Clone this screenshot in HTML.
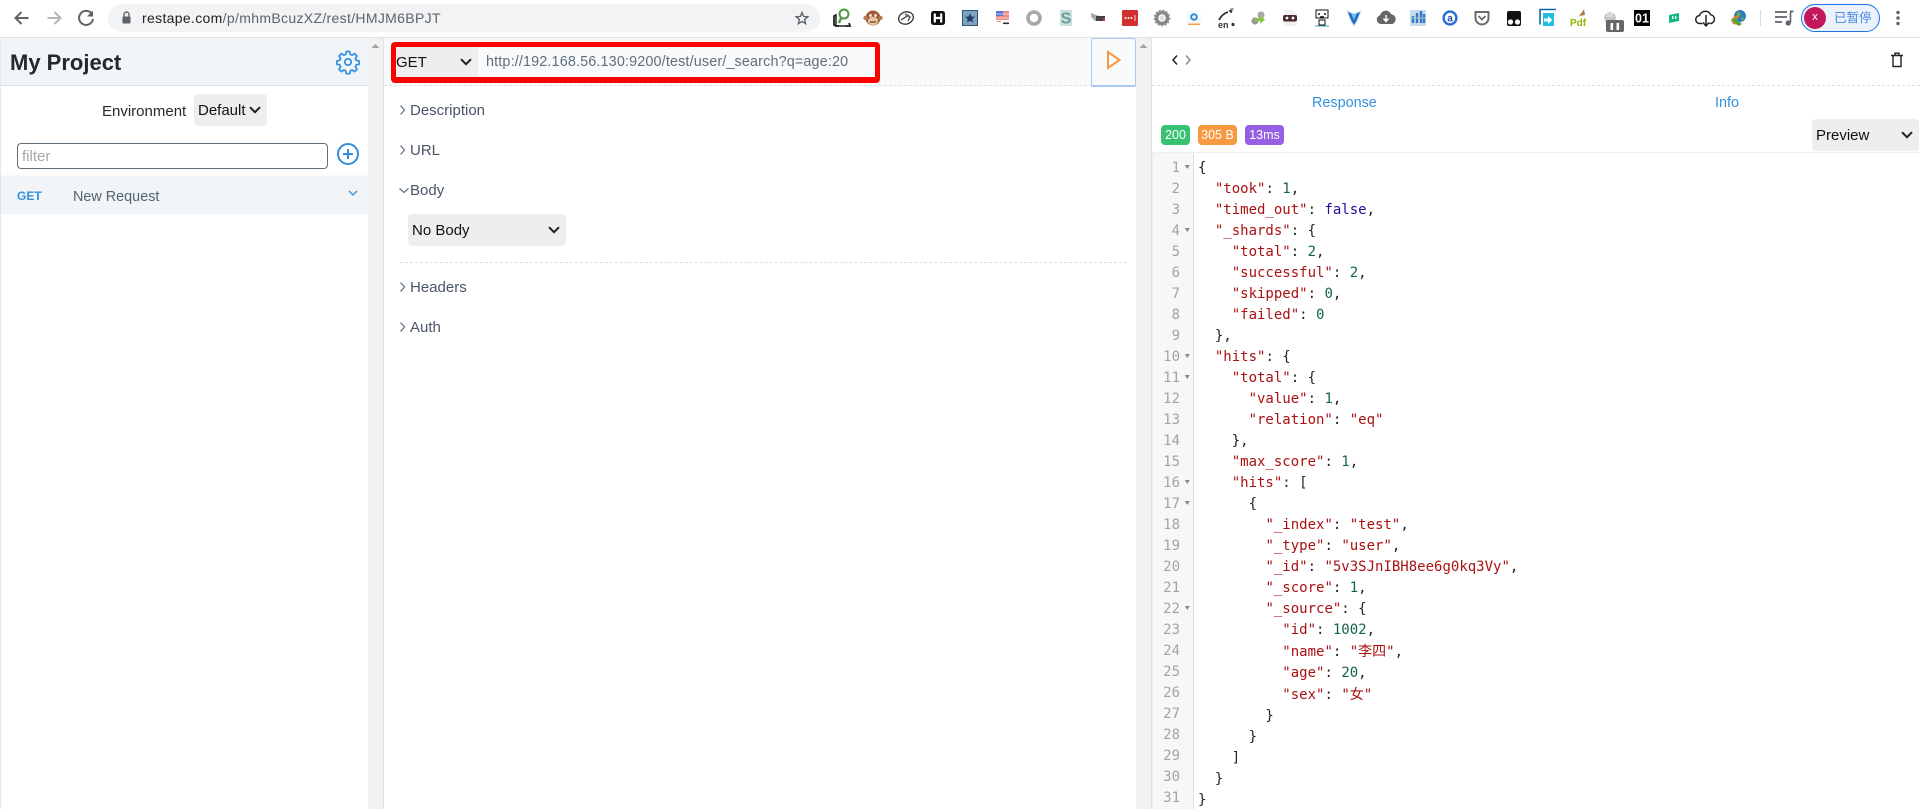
<!DOCTYPE html>
<html><head><meta charset="utf-8"><title>Restape</title>
<style>
html,body{margin:0;padding:0;width:1920px;height:809px;overflow:hidden;background:#fff;font-family:"Liberation Sans","Noto Sans CJK SC",sans-serif}
.a{position:absolute}
.t{position:absolute;white-space:nowrap;line-height:20px;height:20px}
.sel{position:absolute;background:#eee;border-radius:4px}
.sec{color:#4a5568;font-size:15px}
svg{position:absolute;overflow:visible}
.code{position:absolute;left:1198px;top:158px;margin:0;font:14px/21px "DejaVu Sans Mono","WenQuanYi Zen Hei",monospace;color:#222;white-space:pre}
.code i{font-style:normal;color:#a11}.code b{font-weight:normal;color:#164}.code u{text-decoration:none;color:#219}
.code em{font-style:normal;font-family:"WenQuanYi Zen Hei","Noto Sans CJK SC",sans-serif;color:#a11}
.nums{position:absolute;left:1153px;top:158px;width:27px;text-align:right;font:14px/21px "DejaVu Sans Mono",monospace;color:#a3a3a3;white-space:pre}
</style></head><body>

<!-- browser toolbar -->
<div class="a" style="left:0;top:0;width:1920px;height:37px;background:#fff"></div>
<div class="a" style="left:0;top:37px;width:1920px;height:1px;background:#dfe1e5"></div>
<div class="a" style="left:108px;top:4px;width:712px;height:28px;background:#f1f3f4;border-radius:14px"></div>
<div class="t" style="left:142px;top:8px;font-size:14px;color:#5f6368;letter-spacing:.33px"><span style="color:#202124">restape.com</span>/p/mhmBcuzXZ/rest/HMJM6BPJT</div>

<svg style="left:0;top:0" width="1920" height="37" viewBox="0 0 1920 37">
<!-- nav -->
<path d="M28.5 18H16M21.5 12l-6 6 6 6" fill="none" stroke="#5f6368" stroke-width="2"/>
<path d="M47.5 18H60M54.5 12l6 6-6 6" fill="none" stroke="#b4b7ba" stroke-width="2"/>
<path d="M91.5 13.5A7 7 0 1 0 93 19" fill="none" stroke="#5f6368" stroke-width="2"/><path d="M93 10.5v6h-6z" fill="#5f6368"/>
<rect x="122.5" y="16.5" width="8" height="7" rx="1" fill="#5f6368"/><path d="M124 17v-2.5a2.5 2.5 0 0 1 5 0V17" fill="none" stroke="#5f6368" stroke-width="1.4"/>
<path d="M802 12.5l1.6 3.9 4.2.4-3.2 2.7 1 4.1-3.6-2.2-3.6 2.2 1-4.1-3.2-2.7 4.2-.4z" fill="none" stroke="#5f6368" stroke-width="1.4"/>

<!-- 842 -->
<path d="M836 15l-2 1v9l2 1h3M846 26h4l-1-3" fill="none" stroke="#222" stroke-width="1.8"/><path d="M836 14v12h12" fill="none" stroke="#222" stroke-width="1.5"/>
<circle cx="844" cy="14" r="4.5" fill="#fff" stroke="#4c9a3f" stroke-width="2"/><path d="M841 18l-2 5" stroke="#4c9a3f" stroke-width="2.4"/>
<!-- 873 monkey -->
<circle cx="873" cy="18" r="7.5" fill="#9c5b3a"/><circle cx="865.5" cy="18" r="2.2" fill="#b77b58"/><circle cx="880.5" cy="18" r="2.2" fill="#b77b58"/>
<ellipse cx="873" cy="21" rx="5" ry="4.2" fill="#e8c4a0"/><circle cx="870.5" cy="15.5" r="1.5" fill="#f3dcc4"/><circle cx="875.5" cy="15.5" r="1.5" fill="#f3dcc4"/><path d="M870 22h6" stroke="#60392a" stroke-width="1.2"/>
<!-- 906 oval -->
<ellipse cx="906" cy="18" rx="7.5" ry="6" transform="rotate(-18 906 18)" fill="#fff" stroke="#333" stroke-width="1.3"/><path d="M901 20l8-5M905 14l5 3-2 4" fill="none" stroke="#555" stroke-width="1.4"/>
<!-- 938 H -->
<rect x="931" y="11" width="14" height="14" rx="2.5" fill="#111"/><path d="M934.8 13.5v9M941.2 13.5v9M934.8 18h6.4" stroke="#fff" stroke-width="2.2"/>
<!-- 970 star -->
<rect x="962.5" y="10.5" width="15" height="15" fill="#7da3c4" stroke="#2f5375" stroke-width="1"/><path d="M970 13.2l1.4 3.3 3.6.3-2.7 2.3.8 3.5-3.1-1.8-3.1 1.8.8-3.5-2.7-2.3 3.6-.3z" fill="#1d3f66"/>
<!-- 1002 flag -->
<rect x="996" y="11" width="13" height="9" fill="#ef8d84"/><rect x="996" y="11" width="7" height="5" fill="#5578d8"/><path d="M996 14h13M996 18h13" stroke="#fff" stroke-width=".7" opacity=".7"/><rect x="997" y="21" width="4" height="1" fill="#ef8d84"/><rect x="1003" y="22.5" width="6" height="1.6" fill="#333"/>
<!-- 1034 ring -->
<circle cx="1034" cy="18" r="6" fill="none" stroke="#a8a8a8" stroke-width="3.6"/>
<!-- 1066 S -->
<rect x="1060" y="10" width="12" height="16" fill="#c9e0de" /><text x="1066" y="23.5" font-family="Liberation Sans" font-weight="bold" font-size="16" text-anchor="middle" fill="#6d9a98">S</text>
<!-- 1098 -->
<path d="M1091 13l11 4 3 1v3h-10l-4-4z" fill="#aaa"/><rect x="1096" y="16" width="9" height="5" fill="#444"/><rect x="1103" y="18" width="2" height="3" fill="#b44"/>
<!-- 1130 red -->
<rect x="1122" y="10" width="16" height="16" rx="1" fill="#d32f2f"/><circle cx="1125.5" cy="18" r="1" fill="#fff"/><circle cx="1128.5" cy="18" r="1" fill="#fff"/><circle cx="1131.5" cy="18" r="1" fill="#fff"/><path d="M1135 15v6" stroke="#fff" stroke-width=".8"/>
<!-- 1162 gear -->
<circle cx="1162" cy="18" r="5.5" fill="none" stroke="#888" stroke-width="3.5"/><circle cx="1162" cy="18" r="7.6" fill="none" stroke="#999" stroke-width="1.6" stroke-dasharray="2 1.6"/><circle cx="1162" cy="18" r="2.5" fill="#ddd"/>
<!-- 1194 -->
<rect x="1187" y="10" width="14" height="16" fill="#f7fafd"/><circle cx="1194" cy="17" r="2.8" fill="none" stroke="#2a8fd8" stroke-width="2"/><rect x="1188" y="23.5" width="12" height="1.5" fill="#f4a63a"/>
<!-- 1226 en -->
<path d="M1219 20q3-6 9-8" fill="none" stroke="#222" stroke-width="1.6"/><path d="M1229 11l3-1-1 3" fill="#222" stroke="#222"/>
<text x="1218" y="28" font-family="Liberation Sans" font-size="9" font-weight="bold" fill="#333">en</text><circle cx="1233" cy="24.5" r="1.6" fill="#333"/><path d="M1230 9h4M1232 9v3" stroke="#777" stroke-width="1"/>
<!-- 1258 -->
<circle cx="1255" cy="21" r="3.6" fill="#999"/><circle cx="1261" cy="15" r="3.6" fill="#aaa"/><path d="M1255 18h5v-3l5 4.5-5 4.5v-3h-5z" fill="#8bc34a"/>
<!-- 1290 mask -->
<path d="M1284 10h9l4 4v12h-13z" fill="#f1f1f1"/><rect x="1283" y="15" width="14" height="6.5" rx="2" fill="#4a2a2a"/><circle cx="1287" cy="18" r="1.4" fill="#fff"/><circle cx="1293" cy="18" r="1.4" fill="#fff"/>
<!-- 1322 pixel -->
<path d="M1316 10h12v8h-12zM1319 20h6v5h-6z" fill="#fff" stroke="#111" stroke-width="1"/><path d="M1318 14h2M1324 14h2M1320 17h4" stroke="#111" stroke-width="1.4"/><rect x="1315" y="25.5" width="14" height="1" fill="#3aa7c9"/>
<!-- 1354 Y -->
<path d="M1347 11l7 3 7-3-4 10-3 5-3-5z" fill="#1e6ec8" stroke="#cfe0f0" stroke-width="1"/><path d="M1351 13l3 2 3-2-3 7z" fill="#7fc4f0"/>
<!-- 1386 cloud -->
<path d="M1381 24a4.5 4.5 0 0 1-1-8.8 6 6 0 0 1 11.3-1 5 5 0 0 1 .7 9.8z" fill="#666"/><path d="M1386 15v5M1383.5 18.5l2.5 3 2.5-3" fill="none" stroke="#fff" stroke-width="1.4"/>
<!-- 1418 -->
<rect x="1410" y="10" width="16" height="16" fill="#c5dcec"/><path d="M1413 16v7M1417 13v10M1421 11v12M1424 14v9" stroke="#3a78c2" stroke-width="2.4"/><path d="M1410 18h16" stroke="#9cc" stroke-width="1"/>
<!-- 1450 a -->
<circle cx="1450" cy="18" r="7.6" fill="#2a6fd6" /><circle cx="1450" cy="18" r="5.2" fill="#fff"/><text x="1450" y="21.5" font-family="Liberation Sans" font-weight="bold" font-size="10" text-anchor="middle" fill="#1a4fa8">a</text>
<!-- 1482 pocket -->
<path d="M1475.5 12h13v6a6.5 6.5 0 0 1-13 0z" fill="#fff" stroke="#6a6a6a" stroke-width="2"/><path d="M1478.5 16l3.5 3.5 3.5-3.5" fill="none" stroke="#6a6a6a" stroke-width="1.8"/>
<!-- 1514 black -->
<path d="M1507 13q0-2 2-2h10q2 0 2 2v11q0 2-2 2h-10q-2 0-2-2z" fill="#111"/><circle cx="1510.5" cy="22" r="2.6" fill="#fff"/><circle cx="1517.5" cy="22" r="2.6" fill="#fff"/>
<!-- 1547 blue -->
<path d="M1556 9.5h-16v15" fill="none" stroke="#0d6aa8" stroke-width="1.6"/><rect x="1543" y="13" width="11" height="13" fill="#22bde0"/><path d="M1544 18.5h4v-2.5l4.5 4-4.5 4v-2.5h-4z" fill="#fff"/>
<!-- 1578 pdf -->
<text x="1570" y="26" font-family="Liberation Sans" font-weight="bold" font-size="10" fill="#8cb800">Pdf</text><path d="M1579 16l4-5 1-2 1 6z" fill="#a8743a"/>
<!-- 1610 ghost -->
<circle cx="1610" cy="18" r="5.8" fill="#c4c4c4"/><text x="1610" y="17" font-family="Liberation Sans" font-size="5" text-anchor="middle" fill="#fff">SR</text>
<rect x="1606" y="20" width="18" height="12" rx="2" fill="#666"/><rect x="1610.5" y="23" width="2.6" height="7" fill="#fff"/><rect x="1616.5" y="23" width="2.6" height="7" fill="#fff"/>
<!-- 1642 01 -->
<rect x="1634" y="10" width="16" height="16" fill="#000"/><text x="1642" y="22.5" font-family="Liberation Sans" font-weight="bold" font-size="12.5" text-anchor="middle" fill="#fff">01</text>
<!-- 1674 -->
<path d="M1669 15l10-2v8l-10 2z" fill="#12b886"/><rect x="1672" y="16" width="1.4" height="3" fill="#fff"/><rect x="1675" y="16" width="1.4" height="3" fill="#fff"/>
<!-- 1706 cloud dl -->
<path d="M1702.5 23.5h-2.5a4 4 0 0 1-.5-8 6 6 0 0 1 11.2-.8 4.5 4.5 0 0 1 .3 8.8h-1.5" fill="none" stroke="#222" stroke-width="1.5"/><path d="M1706 15v11M1703 22.5l3 3.5 3-3.5" fill="none" stroke="#222" stroke-width="1.5"/>
<!-- 1738 globe -->
<circle cx="1740" cy="16" r="6" fill="#2f7bc4"/><path d="M1737 12l4 1-1 3-3 1zM1741 17l3 1-2 3z" fill="#6cb24a"/><path d="M1731 20q4-6 9-4-3 1-4 7l2 2-5-1z" fill="#d9822b"/><path d="M1731 20l8 6 3-2-7-6z" fill="#55a83c"/>
<!-- divider -->
<rect x="1760" y="10" width="1" height="16" fill="#dadce0"/>
<!-- music -->
<path d="M1775 12h12M1775 17h12M1775 22h7" stroke="#5f6368" stroke-width="1.8"/><path d="M1790.5 12v10.5" stroke="#5f6368" stroke-width="1.6"/><circle cx="1788.2" cy="23" r="2.6" fill="#5f6368"/><path d="M1790 11.5h3.5" stroke="#5f6368" stroke-width="1.8"/>
<!-- dots -->
<circle cx="1898" cy="12.5" r="1.7" fill="#5f6368"/><circle cx="1898" cy="18" r="1.7" fill="#5f6368"/><circle cx="1898" cy="23.5" r="1.7" fill="#5f6368"/>
</svg>
<!-- profile pill -->
<div class="a" style="left:1801px;top:4px;width:77px;height:26px;border:1px solid #1a73e8;border-radius:14px;background:#ecf2fc"></div>
<div class="a" style="left:1804px;top:7px;width:22px;height:22px;border-radius:50%;background:#c2185b;color:#fff;font-size:11px;line-height:21px;text-align:center">x</div>
<div class="t" style="left:1834px;top:7px;font-size:12.5px;color:#4285e0;font-family:'Noto Sans CJK SC',sans-serif">已暂停</div>

<!-- sidebar -->
<div class="a" style="left:0;top:38px;width:1px;height:771px;background:#e2e8f0"></div>
<div class="a" style="left:1px;top:38px;width:367px;height:47px;background:#f1f5f8;border-bottom:1px solid #dae1e7"></div>
<div class="t" style="left:10px;top:53px;font-size:22px;font-weight:bold;color:#22292f">My Project</div>
<svg style="left:336px;top:50px" width="24" height="24" viewBox="0 0 24 24" fill="none" stroke="#3490dc" stroke-width="1.7" stroke-linejoin="round"><circle cx="12" cy="12" r="3.2"/><path d="M10.3 1.5h3.4l.6 2.9 1.8.8 2.5-1.6 2.4 2.4-1.6 2.5.8 1.8 2.9.6v3.4l-2.9.6-.8 1.8 1.6 2.5-2.4 2.4-2.5-1.6-1.8.8-.6 2.9h-3.4l-.6-2.9-1.8-.8-2.5 1.6-2.4-2.4 1.6-2.5-.8-1.8-2.9-.6v-3.4l2.9-.6.8-1.8-1.6-2.5 2.4-2.4 2.5 1.6 1.8-.8z"/></svg>
<div class="t" style="left:102px;top:102px;font-size:15px;color:#22292f">Environment</div>
<div class="sel" style="left:194px;top:94px;width:73px;height:32px"></div>
<div class="t" style="left:198px;top:101px;font-size:15px;color:#111">Default</div>
<svg style="left:249px;top:106px" width="12" height="8" viewBox="0 0 12 8"><path d="M1 1.2l5 5 5-5" fill="none" stroke="#222" stroke-width="2"/></svg>
<div class="a" style="left:17px;top:143px;width:309px;height:24px;border:1px solid #606f7b;border-radius:4px;background:#fff"></div>
<div class="t" style="left:22px;top:147px;font-size:15px;color:#a8a8a8">filter</div>
<svg style="left:336px;top:142px" width="24" height="24" viewBox="0 0 24 24" fill="none" stroke="#3490dc" stroke-width="2"><circle cx="12" cy="12" r="10"/><path d="M12 7v10M7 12h10"/></svg>
<div class="a" style="left:1px;top:177px;width:367px;height:37px;background:#f1f5f8;box-shadow:0 -2px 3px rgba(0,0,0,.04)"></div>
<div class="t" style="left:17px;top:186px;font-size:12px;font-weight:bold;color:#3490dc">GET</div>
<div class="t" style="left:73px;top:187px;font-size:14.4px;color:#56636e">New Request</div>
<svg style="left:348px;top:190px" width="10" height="6" viewBox="0 0 10 6"><path d="M1 1l4 4 4-4" fill="none" stroke="#3490dc" stroke-width="1.3"/></svg>

<!-- sidebar scrollbar -->
<div class="a" style="left:368px;top:38px;width:15px;height:771px;background:#f1f1f1"></div>
<svg style="left:371px;top:43px" width="10" height="6"><path d="M4.5 1l4 4h-8z" fill="#a3a3a3"/></svg>
<div class="a" style="left:383px;top:38px;width:1px;height:771px;background:#dae1e7"></div>

<!-- center -->
<div class="a" style="left:384px;top:38px;width:708px;height:47px;background:#f8fafc;border-bottom:1px dashed #dae1e7"></div>
<div class="a" style="left:391px;top:42px;width:489px;height:41px;border-radius:4px;background:#f00"></div>
<div class="a" style="left:396px;top:47px;width:479px;height:30px;background:#f8fafc"></div>
<div class="a" style="left:396px;top:47px;width:82px;height:30px;background:#eee"></div>
<div class="t" style="left:396px;top:53px;font-size:15px;color:#111">GET</div>
<svg style="left:460px;top:58px" width="12" height="8" viewBox="0 0 12 8"><path d="M1 1.2l5 5 5-5" fill="none" stroke="#222" stroke-width="2"/></svg>
<div class="t" style="left:486px;top:52px;font-size:14.4px;color:#606f7b;letter-spacing:.14px">http://192.168.56.130:9200/test/user/_search?q=age:20</div>
<div class="a" style="left:1091px;top:38px;width:43px;height:46px;background:#f8fafc;border:1px solid #a9c9f5;border-bottom-width:2px;border-radius:2px"></div>
<svg style="left:1105px;top:50px" width="18" height="20" viewBox="0 0 18 20"><path d="M3 2l11.5 8L3 18z" fill="none" stroke="#f6993f" stroke-width="2"/></svg>
<div class="a" style="left:1136px;top:38px;width:15px;height:771px;background:#f1f1f1"></div>
<svg style="left:1139px;top:43px" width="10" height="6"><path d="M4.5 1l4 4h-8z" fill="#a3a3a3"/></svg>
<div class="a" style="left:1151px;top:38px;width:1px;height:771px;background:#dae1e7"></div>

<!-- sections -->
<svg style="left:399px;top:0" width="14" height="340" fill="none" stroke="#606f7b" stroke-width="1.2"><path d="M1.5 105.5l4 4.5-4 4.5M1.5 145.5l4 4.5-4 4.5M.5 188.5l4.5 4 4.5-4M1.5 282.5l4 4.5-4 4.5M1.5 322.5l4 4.5-4 4.5"/></svg>
<div class="t sec" style="left:410px;top:101px;">Description</div>
<div class="t sec" style="left:410px;top:141px;">URL</div>
<div class="t sec" style="left:410px;top:181px;">Body</div>
<div class="sel" style="left:408px;top:214px;width:158px;height:32px"></div>
<div class="t" style="left:412px;top:221px;font-size:15px;color:#111">No Body</div>
<svg style="left:548px;top:226px" width="12" height="8" viewBox="0 0 12 8"><path d="M1 1.2l5 5 5-5" fill="none" stroke="#222" stroke-width="2"/></svg>
<div class="a" style="left:400px;top:262px;width:727px;border-top:1px dashed #dae1e7"></div>
<div class="t sec" style="left:410px;top:278px;">Headers</div>
<div class="t sec" style="left:410px;top:318px;">Auth</div>

<!-- right panel -->
<svg style="left:1170px;top:54px" width="24" height="12" fill="none" stroke-width="1.5"><path d="M7 1.5l-4 4.5 4 4.5" stroke="#222"/><path d="M16 1.5l4 4.5-4 4.5" stroke="#8a8a8a"/></svg>
<svg style="left:1890px;top:52px" width="14" height="16" viewBox="0 0 14 16" fill="none" stroke="#222" stroke-width="1.4"><path d="M3 4v10.5h8V4M1 3.5h12M5 3.5V1.2h4v2.3"/></svg>
<div class="a" style="left:1152px;top:85px;width:768px;border-top:1px dashed #dae1e7"></div>
<div class="t" style="left:1312px;top:93px;font-size:14.4px;color:#3490dc">Response</div>
<div class="t" style="left:1715px;top:93px;font-size:14.4px;color:#3490dc">Info</div>

<div class="a" style="left:1161px;top:125px;width:29px;height:20px;border-radius:4px;background:#38c172;color:#fff;font-size:12.5px;line-height:20px;text-align:center">200</div>
<div class="a" style="left:1198px;top:125px;width:39px;height:20px;border-radius:4px;background:#f6993f;color:#fff;font-size:12.5px;line-height:20px;text-align:center">305 B</div>
<div class="a" style="left:1245px;top:125px;width:39px;height:20px;border-radius:4px;background:#9561e2;color:#fff;font-size:12.5px;line-height:20px;text-align:center">13ms</div>

<div class="sel" style="left:1812px;top:119px;width:107px;height:32px"></div>
<div class="t" style="left:1816px;top:126px;font-size:15px;color:#111">Preview</div>
<svg style="left:1901px;top:131px" width="12" height="8" viewBox="0 0 12 8"><path d="M1 1.2l5 5 5-5" fill="none" stroke="#222" stroke-width="2"/></svg>

<!-- editor -->
<div class="a" style="left:1153px;top:152px;width:767px;height:1px;background:#eee"></div>
<div class="a" style="left:1152px;top:153px;width:1px;height:656px;background:#eee"></div>
<div class="a" style="left:1153px;top:153px;width:40px;height:656px;background:#f7f7f7;border-right:1px solid #ddd"></div>
<div class="nums">1
2
3
4
5
6
7
8
9
10
11
12
13
14
15
16
17
18
19
20
21
22
23
24
25
26
27
28
29
30
31</div>
<svg style="left:1184px;top:153px" width="8" height="656" fill="#888"><path d="M.8 12h5l-2.5 4zM.8 75h5l-2.5 4zM.8 201h5l-2.5 4zM.8 222h5l-2.5 4zM.8 327h5l-2.5 4zM.8 348h5l-2.5 4zM.8 453h5l-2.5 4z"/></svg>
<pre class="code">{
  <i>"took"</i>: <b>1</b>,
  <i>"timed_out"</i>: <u>false</u>,
  <i>"_shards"</i>: {
    <i>"total"</i>: <b>2</b>,
    <i>"successful"</i>: <b>2</b>,
    <i>"skipped"</i>: <b>0</b>,
    <i>"failed"</i>: <b>0</b>
  },
  <i>"hits"</i>: {
    <i>"total"</i>: {
      <i>"value"</i>: <b>1</b>,
      <i>"relation"</i>: <i>"eq"</i>
    },
    <i>"max_score"</i>: <b>1</b>,
    <i>"hits"</i>: [
      {
        <i>"_index"</i>: <i>"test"</i>,
        <i>"_type"</i>: <i>"user"</i>,
        <i>"_id"</i>: <i>"5v3SJnIBH8ee6g0kq3Vy"</i>,
        <i>"_score"</i>: <b>1</b>,
        <i>"_source"</i>: {
          <i>"id"</i>: <b>1002</b>,
          <i>"name"</i>: <i>"<em>李四</em>"</i>,
          <i>"age"</i>: <b>20</b>,
          <i>"sex"</i>: <i>"<em>女</em>"</i>
        }
      }
    ]
  }
}</pre>
</body></html>
